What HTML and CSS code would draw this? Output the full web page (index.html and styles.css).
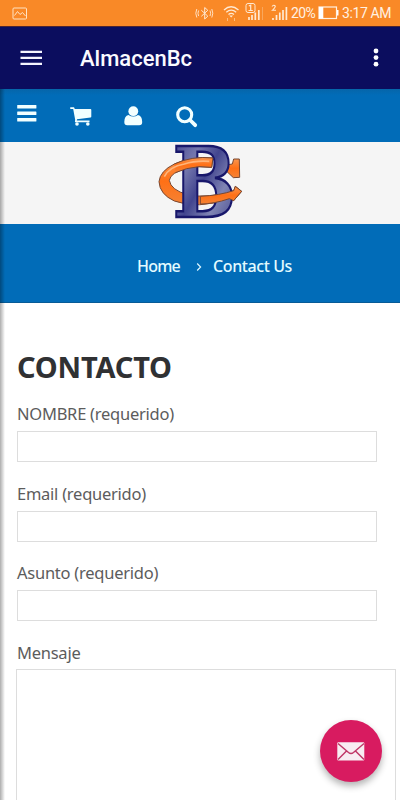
FILE: index.html
```html
<!DOCTYPE html>
<html lang="es">

<head>
    <meta charset="UTF-8">
    <meta name="viewport" content="width=device-width, initial-scale=1.0">
    <title>AlmacenBc</title>
    <link rel="stylesheet" href="styles.css">
</head>

<body>
    <div class="status-bar">
        <svg class="picture-icon" width="16" height="13" viewBox="0 0 16 13" fill="none" stroke="#ffe3c4">
            <rect x="1" y="1" width="13.5" height="11" rx="1" />
            <path d="M2.5 8.5 L5.5 4.5 L8 7.5 L10.5 5.5 L13.5 9" />
        </svg>
        <!-- bluetooth, wifi and both signals -->
        <svg class="radio-icons" width="94" height="22" viewBox="195 2 94 22" fill="none" stroke="#ffe9d2">
            <path d="M201.3 10.2 L207.8 16.2 L204.7 19 V7.5 L207.8 10.3 L201.3 16.3" />
            <path d="M198.6 10.5 Q197.3 13.3 198.6 16 M196.8 9 Q194.8 13.3 196.8 17.5 M210 10.5 Q211.3 13.3 210 16 M211.8 9 Q213.8 13.3 211.8 17.5" stroke-width=".9" />
            <path d="M224 10 Q231 3.5 238.5 10 M226.3 12.2 Q231.2 8 236.2 12.2 M228.5 14.5 Q231.2 12.2 234 14.5" stroke-width="1.3" />
            <path d="M229.3 15.5 H233 L231.2 17.5 Z" fill="#ffe9d2" stroke="none" />
            <path d="M227.5 18 V21 M234.5 18 V21" stroke="#fbbd80" />
            <rect x="246" y="3.5" width="9" height="9" rx="2" />
            <path d="M248.8 6 L250.7 5.2 V10.5 M248.5 10.5 H252.8" stroke-width="1.2" />
            <path d="M249 17 V20 M252 15 V20 M255.3 12.5 V20 M258.8 10 V20" stroke-width="1.7" />
            <path d="M262.5 7 V20" stroke="#f9a75c" />
            <path d="M272 6.5 Q273.8 4.3 275.3 6.2 Q275.3 7.8 272.4 10.3 H276" stroke-width="1.1" />
            <path d="M273 18 V20 M276.5 15 V20 M279.8 12.5 V20 M283 10 V20 M286.4 7 V20" stroke-width="1.7" />
        </svg>
        <span class="percent">20%</span>
        <svg class="battery-icon" width="21" height="14" viewBox="0 0 21 14" fill="none" stroke="#fff1e2">
            <rect x="1" y="1" width="17.5" height="11.5" stroke-width="1.2" />
            <path d="M1 1 H5.3 V12.5 H1 Z M19 4 H20.5 V9.5 H19 Z" fill="#fff" stroke="none" />
        </svg>
        <span class="time">3:17 AM</span>
    </div>

    <header class="app-bar">
        <svg class="drawer-icon" width="22" height="16" viewBox="0 0 22 16" fill="#f4f4ff">
            <path d="M0.5 0.8 H22 V3.1 H.5 Z M.5 6.8 H22 V9.1 H.5 Z M.5 12.8 H22 V15.1 H.5 Z" />
        </svg>
        <h1 class="app-title">AlmacenBc</h1>
        <svg class="more-icon" width="6" height="20" viewBox="0 0 6 20" fill="#fff">
            <circle cx="3" cy="3" r="2.4" />
            <circle cx="3" cy="9.6" r="2.4" />
            <circle cx="3" cy="16.2" r="2.4" />
        </svg>
    </header>

    <div class="page">
        <nav class="site-nav">
            <svg width="20" height="18" viewBox="0 0 20 18" fill="#f2ffff">
                <rect x=".2" y="1" width="19.2" height="3.4" rx=".5" />
                <rect x=".2" y="7.5" width="19.2" height="3.4" rx=".5" />
                <rect x=".2" y="14" width="19.2" height="3.4" rx=".5" />
            </svg>
            <svg class="cart" width="22" height="20" viewBox="0 0 22 20" fill="#f2ffff">
                <path d="M0 1 Q0 .2 .8 .2 H4 L4.8 2 H20.5 Q21.3 2 21.3 3 V9.5 Q21.3 10.3 20.5 10.5 L7 12.2 L6.8 13.5 H19.5 V15.2 H5.3 Q4.5 14.8 5.2 13 L3.2 2 H1 Q0 1.8 0 1 Z" />
                <circle cx="7" cy="17" r="1.8" />
                <circle cx="17.8" cy="17" r="1.8" />
            </svg>
            <svg class="user" width="19" height="20" viewBox="0 0 19 20" fill="#f2ffff">
                <path d="M4.5 9 Q.3 9.8 .3 16 Q.3 19.3 3.2 19.3 H15.2 Q18.2 19.3 18.2 16 Q18.2 9.8 14 9 Q9.3 12 4.5 9 Z" />
                <circle cx="9.3" cy="5.2" r="4.9" />
            </svg>
            <svg class="search" width="22" height="22" viewBox="0 0 22 22" fill="none" stroke="#f2ffff" stroke-width="3.1">
                <circle cx="8.7" cy="8.7" r="7" />
                <path d="M14 14 L19.2 19.2" stroke-width="3.8" stroke-linecap="round" />
            </svg>
        </nav>

        <div class="logo">
            <svg width="86" height="83" viewBox="50 18 258 249">
                <defs>
                    <linearGradient id="steel" x1="0" y1="0" x2="1" y2="1">
                        <stop offset="0" stop-color="#37378a" />
                        <stop offset=".3" stop-color="#7477ad" />
                        <stop offset=".48" stop-color="#42458f" />
                        <stop offset=".68" stop-color="#8085b4" />
                        <stop offset="1" stop-color="#333580" />
                    </linearGradient>
                    <linearGradient id="flame" x1="0" y1="0" x2="0" y2="1">
                        <stop offset="0" stop-color="#f8964f" />
                        <stop offset=".5" stop-color="#ff7016" />
                        <stop offset="1" stop-color="#f48336" />
                    </linearGradient>
                </defs>
                <g fill="url(#flame)" stroke="#794832" stroke-width="3" stroke-linejoin="round">
                    <path d="M264 86 L276 84 L280 69 L297 69 L298 124 L279 125 L258 105 Z" />
                    <path d="M218 66 Q155 59 102 84 Q59 105 56 137 Q58 175 102 195 Q171 221 267 188 L280 194 L304 166 L285 151 L280 164 Q208 189 142 176 Q91 162 87 133 Q91 109 139 98 Q175 88 214 94 Z" />
                </g>
                <text class="logo-letter" x="97" y="242" textLength="190" lengthAdjust="spacingAndGlyphs" fill="url(#steel)">B</text>
                <g fill="url(#flame)" stroke="#794832" stroke-width="3" stroke-linejoin="round">
                    <path d="M102 84 Q155 59 218 66 L214 94 Q175 88 139 98 L105 110" />
                    <path d="M180 181 Q238 178 280 164 L285 151 L304 166 L280 194 L267 188 Q220 204 180 204 Z" />
                </g>
                <path d="M72 122 Q87 92 132 84 Q165 73 207 76" fill="none" stroke="#ffb57b" stroke-width="5" />
            </svg>
        </div>

        <div class="breadcrumb">
            <a class="crumb-home">Home</a>
            <svg width="6" height="8" viewBox="0 0 6 8" fill="none" stroke="#dcf6ff" stroke-width="1.2">
                <path d="M1.2 .5 L4.6 4 L1.2 7.5" />
            </svg>
            <span class="crumb-current">Contact Us</span>
        </div>

        <main class="content">
            <h2>CONTACTO</h2>
            <form>
                <label for="nombre">NOMBRE (requerido)</label>
                <input type="text" id="nombre">
                <label for="email">Email (requerido)</label>
                <input type="email" id="email">
                <label for="asunto">Asunto (requerido)</label>
                <input type="text" id="asunto">
                <label for="mensaje">Mensaje</label>
                <textarea id="mensaje"></textarea>
            </form>
        </main>
    </div>

    <button class="fab" aria-label="Email">
        <svg width="28" height="19" viewBox="0 0 28 19">
            <rect x=".3" y=".3" width="27" height="18.2" rx="1" fill="#f8edf2" />
            <path d="M1 1.5 L11.5 10.5 Q14 12.5 16.5 10.5 L27 1.5 M1 17.5 L9.5 9 M27 17.5 L18.5 9" fill="none" stroke="#c03868" stroke-width="1.5" />
        </svg>
    </button>
</body>

</html>
```

FILE: styles.css
```css
* {
    box-sizing: border-box;
}

body {
    margin: 0;
    height: 800px;
    overflow: hidden;
    background-color: #fff;
    font-family: "Noto Sans", sans-serif;
}

svg {
    display: block;
    flex-shrink: 0;
}

.status-bar {
    display: flex;
    align-items: center;
    height: 27px;
    padding-left: 12px;
    background-color: #f98927;
    border-bottom: 1px solid #4d2432;
    color: #fff1e2;
    font-family: Roboto, sans-serif;
    font-size: 14px;
    white-space: nowrap;
}

.radio-icons {
    margin-left: 167px;
}

.percent {
    width: 25px;
    margin-left: 2px;
    letter-spacing: -0.6px;
}

.battery-icon {
    margin-left: 2px;
}

.time {
    margin-left: 3px;
    letter-spacing: -0.4px;
}

.app-bar {
    display: flex;
    align-items: center;
    height: 62px;
    padding: 0 21px 0 20px;
    background-color: #0b0d5e;
}

.app-title {
    margin: 1px auto 0 38px;
    color: #fafaff;
    font-family: Roboto, sans-serif;
    font-size: 22px;
    font-weight: 500;
    letter-spacing: 0;
}

.page {
    position: relative;
    height: 711px;
}

/* shadow down the left edge of the web view */
.page::before {
    content: "";
    position: absolute;
    left: 0;
    top: 0;
    bottom: 0;
    width: 5px;
    background: linear-gradient(to right, rgba(0, 0, 0, 0.32), transparent);
}

.site-nav {
    display: flex;
    align-items: flex-start;
    height: 53px;
    padding: 15px 17px 0;
    background: linear-gradient(#0665a9, #016cb8 6px);
}

.cart {
    margin: 3px 0 0 33px;
}

.user {
    margin: 2px 0 0 32px;
}

.search {
    margin: 2px 0 0 33px;
}

.logo {
    display: flex;
    justify-content: center;
    height: 82px;
    background-color: #f5f5f5;
}

.logo svg {
    overflow: visible;
}

.logo-letter {
    font-family: "DejaVu Serif", serif;
    font-size: 292px;
    font-weight: 700;
    stroke: #18176b;
    stroke-width: 8px;
}

.breadcrumb {
    display: flex;
    align-items: center;
    height: 79px;
    padding: 5px 0 0 137px;
    background-color: #016cb8;
    border-bottom: 1px solid #075b96;
    color: #e3fbff;
    font-size: 16px;
    font-weight: 500;
    white-space: nowrap;
}

.breadcrumb svg {
    margin: 2px 11px 0 0;
}

.crumb-home {
    width: 59px;
    letter-spacing: -0.8px;
}

.crumb-current {
    letter-spacing: -0.4px;
}

.content {
    padding: 44px 0 0 17px;
}

h2 {
    margin: 0;
    height: 41px;
    color: #303133;
    font-size: 29px;
    font-weight: 700;
    letter-spacing: -0.2px;
    line-height: 40px;
}

label {
    display: block;
    height: 43px;
    padding-top: 14px;
    color: #5c5c5c;
    font-size: 16.5px;
    letter-spacing: -0.25px;
    line-height: 24px;
}

input,
textarea {
    display: block;
    margin: 0;
    border: 1px solid #ddd;
    border-radius: 0;
    background-color: #fff;
}

input {
    width: 360px;
    height: 31px;
    margin-bottom: 5.6px;
}

textarea {
    width: 380px;
    height: 160px;
    margin: -1px 0 0 -1px;
    resize: none;
}

.fab {
    position: fixed;
    left: 320px;
    top: 720px;
    display: flex;
    align-items: center;
    justify-content: center;
    width: 62px;
    height: 62px;
    padding: 0;
    border: 0;
    border-radius: 50%;
    background-color: #d81b60;
    box-shadow: 0 4px 7px rgba(0, 0, 0, 0.3);
}
```
